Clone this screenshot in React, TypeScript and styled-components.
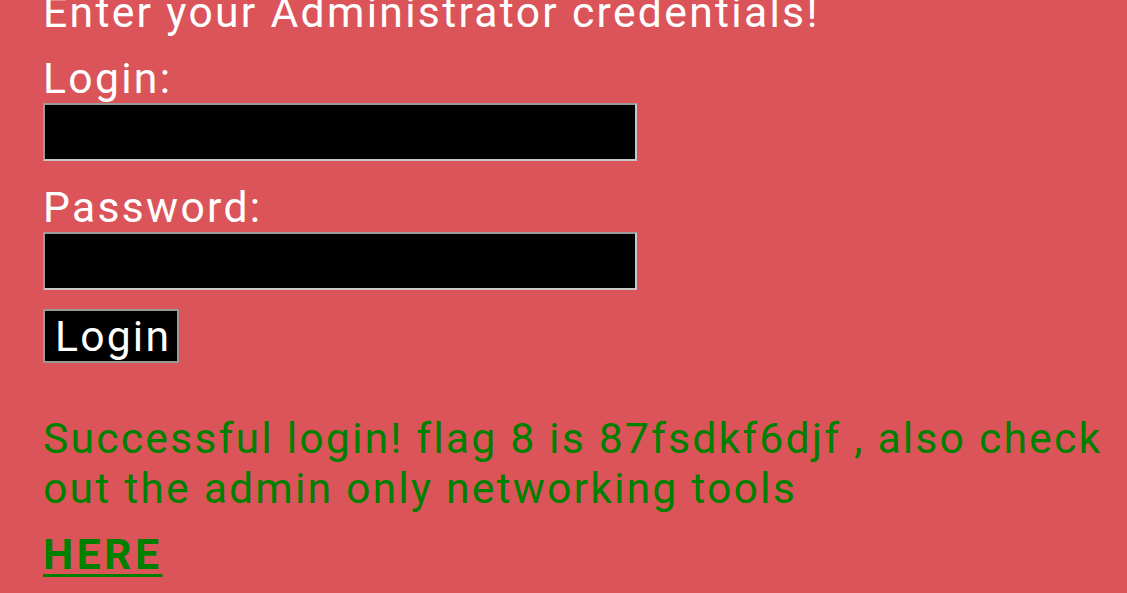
import React from "react";
import styled, { createGlobalStyle } from "styled-components";

const Global = createGlobalStyle`
  html, body {
    margin: 0;
    padding: 0;
    background: #db545a;
    overflow: hidden;
  }
  body {
    font-family: Roboto, "Liberation Sans", sans-serif;
  }
`;

const Page = styled.div`
  display: flex;
  flex-direction: column;
  align-items: flex-start;
  padding-left: 43px;
  margin-top: -13px;
  font-size: 42.67px;
  line-height: 50px;
  letter-spacing: 2.3px;
  color: #ffffff;
`;

const Heading = styled.div`
  margin-bottom: 16px;
`;

const Label = styled.label`
  display: block;
`;

const Field = styled.input<{ $gap: number }>`
  box-sizing: border-box;
  width: 594px;
  height: 58px;
  background: #000;
  border: 2px solid #9a9a9a;
  border-right-color: #c8c8c8;
  border-bottom-color: #c8c8c8;
  color: #fff;
  margin: 0 0 ${(p) => p.$gap}px 0;
  padding: 0;
  outline: none;
`;

const Button = styled.button`
  box-sizing: border-box;
  height: 54px;
  padding: 0 6px 0 10px;
  background: #000;
  color: #fff;
  border: 2px solid #9a9a9a;
  font-family: Roboto, "Liberation Sans", sans-serif;
  font-size: 42.67px;
  line-height: 50px;
  letter-spacing: 2.2px;
  margin-bottom: 50px;
`;

const Message = styled.p`
  margin: 0 0 16px 0;
  color: #008000;
  max-width: 1090px;
  letter-spacing: 2.2px;
`;

const Link = styled.a`
  color: #008000;
  font-weight: 700;
  letter-spacing: 3.5px;
  text-decoration: underline;
  text-decoration-thickness: 3px;
  text-underline-offset: 5px;
`;

export default function App() {
  return (
    <>
      <Global />
      <Page>
        <Heading>Enter your Administrator credentials!</Heading>
        <Label>Login:</Label>
        <Field $gap={21} type="text" />
        <Label>Password:</Label>
        <Field $gap={19} type="password" />
        <Button>Login</Button>
        <Message>
          Successful login! flag 8 is 87fsdkf6djf , also check out the admin only networking tools
        </Message>
        <Link href="#">HERE</Link>
      </Page>
    </>
  );
}
